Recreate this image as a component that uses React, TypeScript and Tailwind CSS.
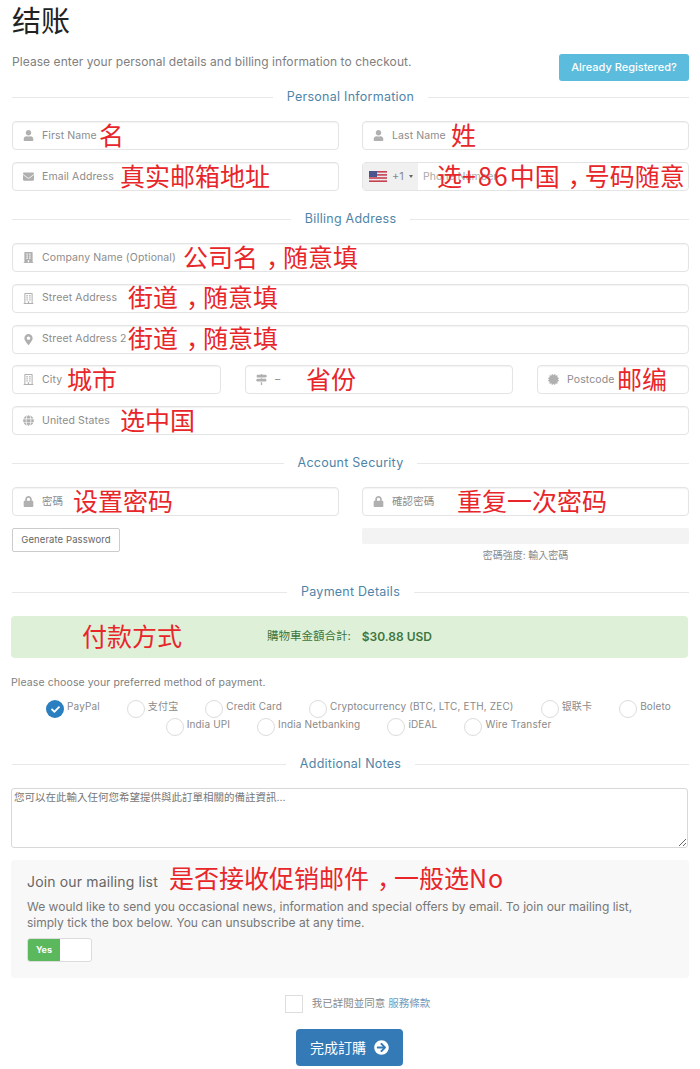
import type { ReactNode } from "react";
import {
  FaArrowCircleRight,
  FaBuilding,
  FaCertificate,
  FaCheck,
  FaEnvelope,
  FaGlobe,
  FaLock,
  FaMapMarkerAlt,
  FaMapSigns,
  FaRegBuilding,
  FaUser,
} from "react-icons/fa";

const Note = ({ className, children }: { className: string; children: ReactNode }) => (
  <span
    className={`absolute top-[calc(50%-2px)] -translate-y-1/2 whitespace-nowrap text-[25px] leading-none text-[#e8262a] font-['Noto_Sans_CJK_SC',sans-serif] ${className}`}
  >
    {children}
  </span>
);

// the annotations have their full-width comma in the middle of its cell
const Comma = () => <span className="inline-block w-[25px] whitespace-nowrap pl-[8px]">，</span>;

const Field = ({ icon, label, noteClass, note, className = "" }: any) => (
  <div
    className={`relative flex h-[29px] items-center rounded-[4px] border border-[#e4e4e4] bg-white shadow-[inset_0_1px_1px_rgba(0,0,0,0.05)] ${className}`}
  >
    <span className="flex w-[29px] justify-center pl-[2px] text-[11px] text-[#b0b0b0]">{icon}</span>
    <span className="text-[10.5px] tracking-[0.1px] text-[#8c8c8c]">{label}</span>
    {note && <Note className={noteClass}>{note}</Note>}
  </div>
);

const Section = ({ title, className = "" }: { title: string; className?: string }) => (
  <div className={`flex items-center gap-[14px] ${className}`}>
    <div className="h-px flex-1 bg-[#e8e8e8]" />
    <h2 className="text-[12.5px] leading-[16px] tracking-[0.25px] text-[#4f84a8]">{title}</h2>
    <div className="h-px flex-1 bg-[#e8e8e8]" />
  </div>
);

const Radio = ({ label, checked }: { label: string; checked?: boolean }) => (
  <label className="flex h-[18px] items-start gap-[3px] text-[10px] leading-[14px] tracking-[0.15px] text-[#8a8a8a]">
    {checked ? (
      <span className="mt-[1px] flex h-[18px] w-[18px] items-center justify-center rounded-full bg-[#2a7fc0] text-[9px] text-white">
        <FaCheck />
      </span>
    ) : (
      <span className="mt-[1px] h-[18px] w-[18px] rounded-full border border-[#dcdcdc] bg-white" />
    )}
    {label}
  </label>
);

const UsFlag = () => (
  <svg width="18" height="11" viewBox="0 0 18 11" className="shrink-0">
    <rect width="18" height="11" fill="#e9e9f0" />
    <rect width="18" height="1.6" fill="#c8414f" />
    <rect y="3.1" width="18" height="1.6" fill="#c8414f" />
    <rect y="6.2" width="18" height="1.6" fill="#c8414f" />
    <rect y="9.4" width="18" height="1.6" fill="#c8414f" />
    <rect width="8" height="6" fill="#4a5590" />
  </svg>
);

export default function App() {
  return (
    <div className="h-[1069px] w-[700px] overflow-hidden bg-white pl-[12px] pr-[11px] font-['Inter','Noto_Sans_CJK_TC',sans-serif] text-[#777]">
      <h1 className="pt-[1px] text-[29px] leading-[36px] text-[#222] font-['Noto_Sans_CJK_SC',sans-serif]">结账</h1>

      <div className="mt-[17px] flex items-start justify-between">
        <p className="text-[12px] leading-[16px] tracking-[0.065px] text-[#808080]">
          Please enter your personal details and billing information to checkout.
        </p>
        <button className="h-[27px] w-[130px] rounded-[3px] bg-[#5bbcdd] text-[11px] font-medium text-white">
          Already Registered?
        </button>
      </div>

      <Section title="Personal Information" className="mt-[8px]" />

      <div className="mt-[16px] grid grid-cols-2 gap-x-[23px] gap-y-[12px]">
        <Field icon={<FaUser />} label="First Name" note="名" noteClass="left-[86px]" />
        <Field icon={<FaUser />} label="Last Name" note="姓" noteClass="left-[88px]" />
        <Field icon={<FaEnvelope />} label="Email Address" note="真实邮箱地址" noteClass="left-[107px]" />
        <div className="relative flex h-[29px] items-center rounded-[4px] border border-[#e4e4e4] bg-white">
          <div className="flex h-full w-[55px] items-center gap-[5px] bg-[#f0f0f0] pl-[6px] text-[11px] text-[#888]">
            <UsFlag />
            <span>+1</span>
            <span className="h-0 w-0 border-x-[2.5px] border-t-[3px] border-x-transparent border-t-[#666]" />
          </div>
          <span className="pl-[5px] text-[10.5px] text-[#aaa]">Phone Number</span>
          <Note className="left-[74px]">
            选<span className="tracking-[2px]">+86</span>中国
            <Comma />
            号码随意
          </Note>
        </div>
      </div>

      <Section title="Billing Address" className="mt-[20px]" />

      <div className="mt-[16px] flex flex-col gap-[11.75px]">
        <Field
          icon={<FaBuilding />}
          label="Company Name (Optional)"
          note={<>公司名<Comma />随意填</>}
          noteClass="left-[170px]"
        />
        <Field icon={<FaRegBuilding />} label="Street Address" note={<>街道<Comma />随意填</>} noteClass="left-[115px]" />
        <Field icon={<FaMapMarkerAlt />} label="Street Address 2" note={<>街道<Comma />随意填</>} noteClass="left-[115px]" />
        <div className="flex gap-[24px]">
          <Field className="w-[209px]" icon={<FaRegBuilding />} label="City" note="城市" noteClass="left-[54px]" />
          <Field className="w-[268px]" icon={<FaMapSigns />} label="–" note="省份" noteClass="left-[60px]" />
          <Field className="w-[152px]" icon={<FaCertificate />} label="Postcode" note="邮编" noteClass="left-[79px]" />
        </div>
        <Field icon={<FaGlobe />} label="United States" note="选中国" noteClass="left-[107px]" />
      </div>

      <Section title="Account Security" className="mt-[20px]" />

      <div className="mt-[16px] grid grid-cols-2 gap-x-[23px]">
        <div>
          <Field icon={<FaLock />} label="密碼" note="设置密码" noteClass="left-[60px]" />
          <button className="mt-[12px] block h-[24px] w-[108px] rounded-[2px] border border-[#ccc] bg-white text-[9.5px] tracking-[0.1px] text-[#666]">
            Generate Password
          </button>
        </div>
        <div>
          <Field icon={<FaLock />} label="確認密碼" note="重复一次密码" noteClass="left-[94px]" />
          <div className="mt-[12px] h-[16px] rounded-[2px] bg-[#f3f3f3]" />
          <p className="mt-[2px] text-center text-[10px] leading-[18px] text-[#888]">密碼強度: 輸入密碼</p>
        </div>
      </div>

      <Section title="Payment Details" className="mt-[20px]" />

      <div className="relative -ml-px mt-[16px] flex h-[42px] w-[677px] items-center justify-center gap-[11px] rounded-[4px] bg-[#dff0d8] text-[#3c763d]">
        <Note className="left-[71px]">付款方式</Note>
        <span className="text-[11.5px]">購物車金額合計:</span>
        <strong className="text-[12px] font-semibold">$30.88 USD</strong>
      </div>

      <p className="-ml-px mt-[18px] text-[10.5px] leading-[14px] tracking-[0.1px] text-[#808080]">
        Please choose your preferred method of payment.
      </p>

      <div className="mt-[9px] flex flex-wrap justify-center gap-x-[27px] pl-[16px]">
        <Radio checked label="PayPal" />
        <Radio label="支付宝" />
        <Radio label="Credit Card" />
        <Radio label="Cryptocurrency (BTC, LTC, ETH, ZEC)" />
        <Radio label="银联卡" />
        <Radio label="Boleto" />
        <Radio label="India UPI" />
        <Radio label="India Netbanking" />
        <Radio label="iDEAL" />
        <Radio label="Wire Transfer" />
      </div>

      <Section title="Additional Notes" className="mt-[21px]" />

      <textarea
        readOnly
        className="-ml-px mt-[16px] block h-[60px] w-[677px] rounded-[3px] border border-[#d8d8d8] bg-white px-[2px] py-[2px] text-[10.5px] leading-[14px] text-[#777] outline-none"
        value="您可以在此輸入任何您希望提供與此訂單相關的備註資訊..."
      />

      <div className="-ml-px mt-[12px] h-[118px] w-[678px] rounded-[4px] bg-[#f8f8f8] pl-[16px] pr-[40px] pt-[11px]">
        <div className="relative">
          <h3 className="text-[14px] leading-[22px] tracking-[0.15px] text-[#666]">Join our mailing list</h3>
          <Note className="left-[142px] mt-[-3px]">
            是否接收促销邮件
            <Comma />
            一般选<span className="tracking-[1px]">No</span>
          </Note>
        </div>
        <p className="mt-[6px] text-[12px] leading-[16px] text-[#777]">
          We would like to send you occasional news, information and special offers by email. To join our mailing list,
          simply tick the box below. You can unsubscribe at any time.
        </p>
        <div className="mt-[7px] flex h-[24px] w-[65px] overflow-hidden rounded-[3px] border border-[#ddd] bg-white">
          <span className="flex w-[32px] items-center justify-center bg-[#5cb85c] text-[9px] font-bold text-white">Yes</span>
        </div>
      </div>

      <div className="mt-[17px] flex items-center justify-center gap-[9px] pl-[14px]">
        <span className="h-[18px] w-[18px] border border-[#ddd] bg-white" />
        <span className="text-[10.5px] leading-[14px] text-[#888]">
          我已詳閱並同意 <a className="text-[#6d9cc0]">服務條款</a>
        </span>
      </div>

      <div className="mt-[16px] flex justify-center pr-[2px]">
        <button className="flex h-[37px] w-[107px] items-center justify-center gap-[8px] rounded-[4px] bg-[#337ab7] text-[14px] text-white">
          完成訂購
          <FaArrowCircleRight className="text-[15px]" />
        </button>
      </div>
    </div>
  );
}
